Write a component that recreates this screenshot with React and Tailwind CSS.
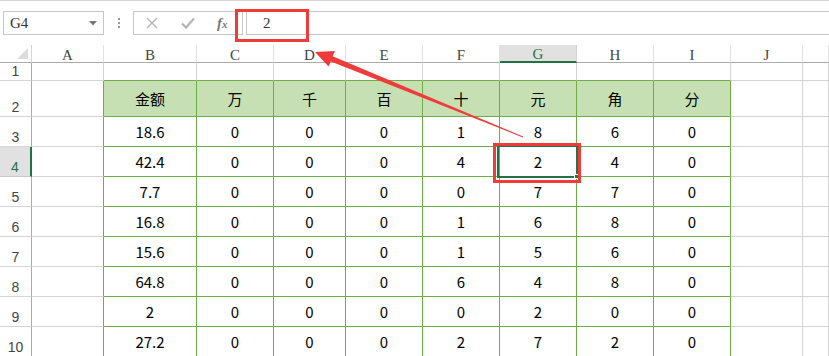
import React from "react";

const cols = ["A", "B", "C", "D", "E", "F", "G", "H", "I", "J", ""];

const heads = ["金额", "万", "千", "百", "十", "元", "角", "分"];

const data = [
  ["18.6", "0", "0", "0", "1", "8", "6", "0"],
  ["42.4", "0", "0", "0", "4", "2", "4", "0"],
  ["7.7", "0", "0", "0", "0", "7", "7", "0"],
  ["16.8", "0", "0", "0", "1", "6", "8", "0"],
  ["15.6", "0", "0", "0", "1", "5", "6", "0"],
  ["64.8", "0", "0", "0", "6", "4", "8", "0"],
  ["2", "0", "0", "0", "0", "2", "0", "0"],
  ["27.2", "0", "0", "0", "2", "7", "2", "0"],
];

// row = sheet row number (1..10), col = 0 for A ... 10 for the trailing column
function cellClass(row, col) {
  const inTable = row >= 2 && col >= 1 && col <= 8;
  if (row === 2 && inTable) {
    return "border-r border-b border-[#70ad47] bg-[#c6e0b4]";
  }
  if (inTable) return "border-r border-b border-[#70ad47]";
  if (row === 1 && col >= 1 && col <= 8) {
    return "border-r border-r-[#d4d4d4] border-b border-b-[#70ad47]";
  }
  if (row >= 2 && col === 0) {
    return "border-r border-r-[#70ad47] border-b border-b-[#d4d4d4]";
  }
  return "border-r border-b border-[#d4d4d4]";
}

function RowHead({ n }) {
  const active = n === 4;
  return (
    <div
      className={
        active
          ? "flex items-end justify-center pb-[2px] bg-[#e1e1e1] border-r-2 border-r-[#217346] border-b border-b-[#c8c8c8] text-[#217346] text-[14px] leading-none font-['Liberation_Sans',sans-serif]"
          : "flex items-end justify-center pb-[2px] border-r border-r-[#ababab] border-b border-b-[#d4d4d4] text-[#444] text-[14px] leading-none font-['Liberation_Sans',sans-serif]"
      }
    >
      {n}
    </div>
  );
}

function Toolbar() {
  return (
    <div className="h-[45px] border-t border-[#d6d6d6] flex items-start pt-[10px]">
      <div className="ml-[3px] w-[101px] h-[24px] border border-[#c6c6c6] flex items-center justify-between pl-[6px] pr-[6px]">
        <span className="text-[15px] text-[#333] font-['Liberation_Serif',serif]">G4</span>
        <svg width="8" height="5" viewBox="0 0 8 5">
          <polygon points="0,0 8,0 4,4.5" fill="#777" />
        </svg>
      </div>
      <div className="ml-[14px] h-[24px] flex flex-col justify-center gap-[2px]">
        <div className="w-[2px] h-[2px] bg-[#9a9a9a]" />
        <div className="w-[2px] h-[2px] bg-[#9a9a9a]" />
        <div className="w-[2px] h-[2px] bg-[#9a9a9a]" />
      </div>
      <div className="ml-[13px] w-[110px] h-[24px] border border-[#c6c6c6] flex items-center pl-[12px]">
        <svg width="12" height="12" viewBox="0 0 12 12">
          <path d="M1 1 L11 11 M11 1 L1 11" stroke="#b4b4b4" strokeWidth="1.3" />
        </svg>
        <svg className="ml-[23px]" width="14" height="12" viewBox="0 0 14 12">
          <path d="M1 6.5 L5 10.5 L13 1.5" stroke="#b4b4b4" strokeWidth="2.2" fill="none" />
        </svg>
        <span className="ml-[22px] text-[15px] italic font-bold text-[#7a7a7a] font-['Liberation_Serif',serif] leading-none">
          f<span className="text-[11px]">x</span>
        </span>
      </div>
      <div className="ml-[3px] flex-1 h-[24px] border-l border-t border-b border-[#c6c6c6] flex items-center pl-[16px]">
        <span className="text-[15px] text-[#333] font-['Liberation_Serif',serif]">2</span>
      </div>
    </div>
  );
}

export default function App() {
  return (
    <div className="relative w-[829px] h-[356px] overflow-hidden bg-white font-['Noto_Sans_CJK_SC',sans-serif]">
      <Toolbar />

      <div className="grid grid-cols-[32px_72px_93px_77px_72px_77px_77px_77px_77px_77px_72px_1fr] grid-rows-[18px_18px_36px_repeat(8,30px)]">
        {/* corner */}
        <div className="relative border-r border-r-[#d4d4d4] border-b border-b-[#ababab]">
          <svg className="absolute right-[3px] bottom-[3px]" width="11" height="11" viewBox="0 0 11 11">
            <polygon points="11,0 11,11 0,11" fill="#dcdcdc" />
          </svg>
        </div>
        {cols.map((c) =>
          c === "G" ? (
            <div
              key={c}
              className="flex items-center justify-center bg-[#e1e1e1] border-r border-r-[#d4d4d4] border-b-2 border-b-[#217346] text-[15px] text-[#217346] font-['Liberation_Serif',serif] leading-none pt-[3px]"
            >
              {c}
            </div>
          ) : (
            <div
              key={c || "k"}
              className="flex items-center justify-center border-r border-r-[#e1e1e1] border-b border-b-[#ababab] text-[15px] text-[#444] font-['Liberation_Serif',serif] leading-none pt-[3px]"
            >
              {c}
            </div>
          )
        )}

        {/* row 1 */}
        <RowHead n={1} />
        {cols.map((c, i) => (
          <div key={"r1" + i} className={cellClass(1, i)} />
        ))}

        {/* row 2: table header */}
        <RowHead n={2} />
        {cols.map((c, i) => (
          <div
            key={"r2" + i}
            className={cellClass(2, i) + " flex items-center justify-center text-[15px] text-black leading-none"}
          >
            {i >= 1 && i <= 8 ? heads[i - 1] : ""}
          </div>
        ))}

        {data.map((r, ri) => (
          <React.Fragment key={"row" + ri}>
            <RowHead n={ri + 3} />
            {cols.map((c, i) => (
              <div
                key={"c" + ri + i}
                className={cellClass(ri + 3, i) + " flex items-center justify-center text-[15px] text-black leading-none"}
              >
                {i >= 1 && i <= 8 ? r[i - 1] : ""}
              </div>
            ))}
          </React.Fragment>
        ))}
      </div>

      {/* active cell G4 */}
      <div className="absolute left-[497px] top-[145px] w-[81px] h-[33px] border-2 border-[#217346] pointer-events-none" />
      <div className="absolute left-[574px] top-[174px] w-[5px] h-[5px] bg-[#217346] border border-white pointer-events-none" />

      {/* annotations */}
      <div className="absolute left-[235px] top-[9px] w-[74px] h-[33px] border-[3px] border-[#f03b3b] pointer-events-none" />
      <div className="absolute left-[493px] top-[143px] w-[88px] h-[40px] border-[3px] border-[#f03b3b] pointer-events-none" />
      <svg className="absolute left-0 top-0 pointer-events-none" width="829" height="356" viewBox="0 0 829 356">
        <polygon
          points="315,52 335,51 332.6,56.2 523.2,136.6 522.8,137.4 330.8,61.4 328.5,66.5"
          fill="#f03b3b"
        />
      </svg>
    </div>
  );
}
